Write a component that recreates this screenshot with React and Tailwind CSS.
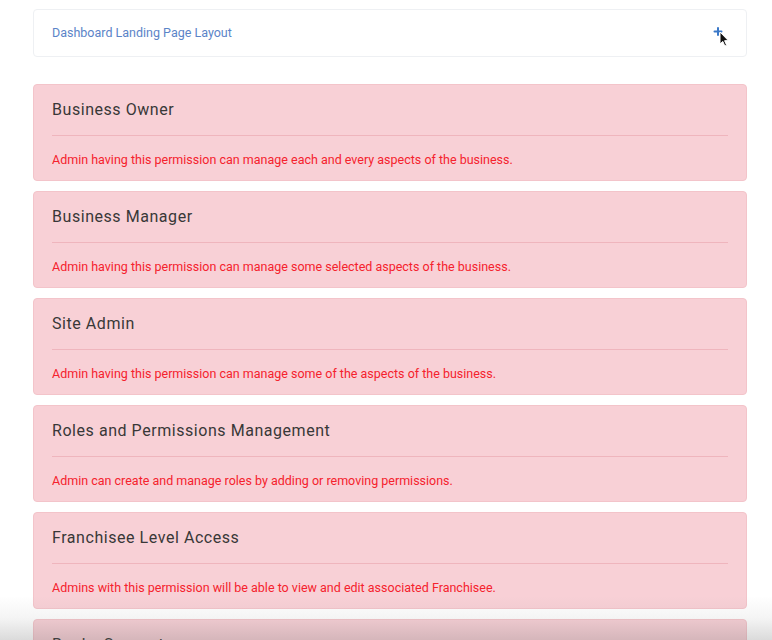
import React from 'react'

const permissions = [
    { title: 'Business Owner', text: 'Admin having this permission can manage each and every aspects of the business.' },
    { title: 'Business Manager', text: 'Admin having this permission can manage some selected aspects of the business.' },
    { title: 'Site Admin', text: 'Admin having this permission can manage some of the aspects of the business.' },
    { title: 'Roles and Permissions Management', text: 'Admin can create and manage roles by adding or removing permissions.' },
    { title: 'Franchisee Level Access', text: 'Admins with this permission will be able to view and edit associated Franchisee.' },
    { title: 'Books Support', text: 'Admins with this permission will be able to view support tickets.' },
]

function PermissionCard({ title, text }) {
    return (
        <div className="rounded-[4px] border border-[#f3c4ca] bg-[#f8d0d6] px-[18px] pt-[15px] pb-[12px]">
            <h3 className="text-[16px] leading-[20px] tracking-[0.55px] text-[#383838]">{title}</h3>
            <div className="mt-[15px] h-px bg-[#efb5bd]"></div>
            <p className="mt-[16px] text-[12.5px] leading-[16px] text-[#f5222d]">{text}</p>
        </div>
    )
}

export default function App() {
    return (
        <div className="relative h-[640px] overflow-hidden bg-white pl-[33px] pr-[25px] pt-[9px]" style={{ fontFamily: 'Roboto, "Liberation Sans", sans-serif' }}>
            <div className="flex h-[48px] items-center justify-between rounded-[4px] border border-[#eef0f3] bg-white pl-[18px] pr-[14px]">
                <span className="text-[12.5px] text-[#5b84c8]">Dashboard Landing Page Layout</span>
                <svg width="20" height="22" viewBox="0 0 20 22" className="mt-[6px]">
                    <path d="M6 3 L6 10 M2.5 6.5 L9.5 6.5" stroke="#3a78c8" strokeWidth="2" strokeLinecap="round" />
                    <path d="M8 7 L8 19 L10.8 16.4 L12.8 21 L14.6 20.2 L12.6 15.7 L16.3 15.6 Z" fill="#111" stroke="#fff" strokeWidth="1" />
                </svg>
            </div>
            <div className="mt-[27px] flex flex-col gap-[10px]">
                {permissions.map((p) => (
                    <PermissionCard key={p.title} title={p.title} text={p.text} />
                ))}
            </div>
            <div className="pointer-events-none absolute inset-x-0 bottom-0 h-[44px] bg-gradient-to-b from-transparent via-[rgba(120,120,120,0.08)] to-[rgba(90,90,90,0.22)]"></div>
        </div>
    )
}
